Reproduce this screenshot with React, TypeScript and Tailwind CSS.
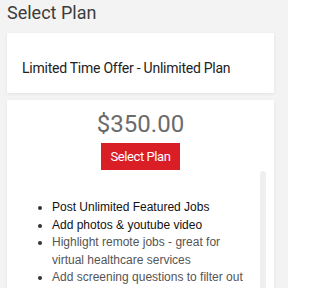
export default function App() {
  const features = [
    { text: "Post Unlimited Featured Jobs", strong: true },
    { text: "Add photos & youtube video", strong: true },
    { text: "Highlight remote jobs - great for virtual healthcare services", strong: false },
    { text: "Add screening questions to filter out candidates", strong: false },
  ]

  return (
    <div className="h-[288px] w-[288px] overflow-hidden bg-[#f3f3f3] font-['Roboto',sans-serif]">
      <h1 className="px-[7px] text-[18px] leading-[26px] text-[#3c3c3c]">Select Plan</h1>

      <div className="mt-[7px] flex flex-col gap-[7px] pl-[7px] pr-[14px]">
        <div className="flex h-[60px] items-center bg-white px-[15px] pt-[10px] shadow-[0_1px_3px_rgba(0,0,0,0.08)]">
          <span className="text-[14px] tracking-[-0.25px] text-[#222]">Limited Time Offer - Unlimited Plan</span>
        </div>

        <div className="flex h-[200px] flex-col bg-white shadow-[0_1px_3px_rgba(0,0,0,0.08)]">
          <div className="flex flex-col items-center pt-[8px]">
            <span className="text-[24px] leading-[32px] text-[#6b6b6b]">$350.00</span>
            <button className="mt-[3px] flex h-[27px] w-[79px] items-center justify-center bg-[#d91e26] text-[13px] tracking-[-0.4px] text-white">
              Select Plan
            </button>
          </div>

          <div className="flex flex-1">
            <ul className="mt-[29px] flex-1 list-disc pl-[45px] pr-[10px] font-['Liberation_Sans',Arial,sans-serif] text-[12px] leading-[17.5px] marker:text-[#333]">
              {features.map((f) => (
                <li key={f.text} className={f.strong ? "text-[#111]" : "text-[#555]"}>
                  {f.text}
                </li>
              ))}
            </ul>
            <div className="mr-[8px] mt-[1px] w-[6px] rounded-t-[3px] bg-[#efefef]" />
          </div>
        </div>
      </div>
    </div>
  )
}
